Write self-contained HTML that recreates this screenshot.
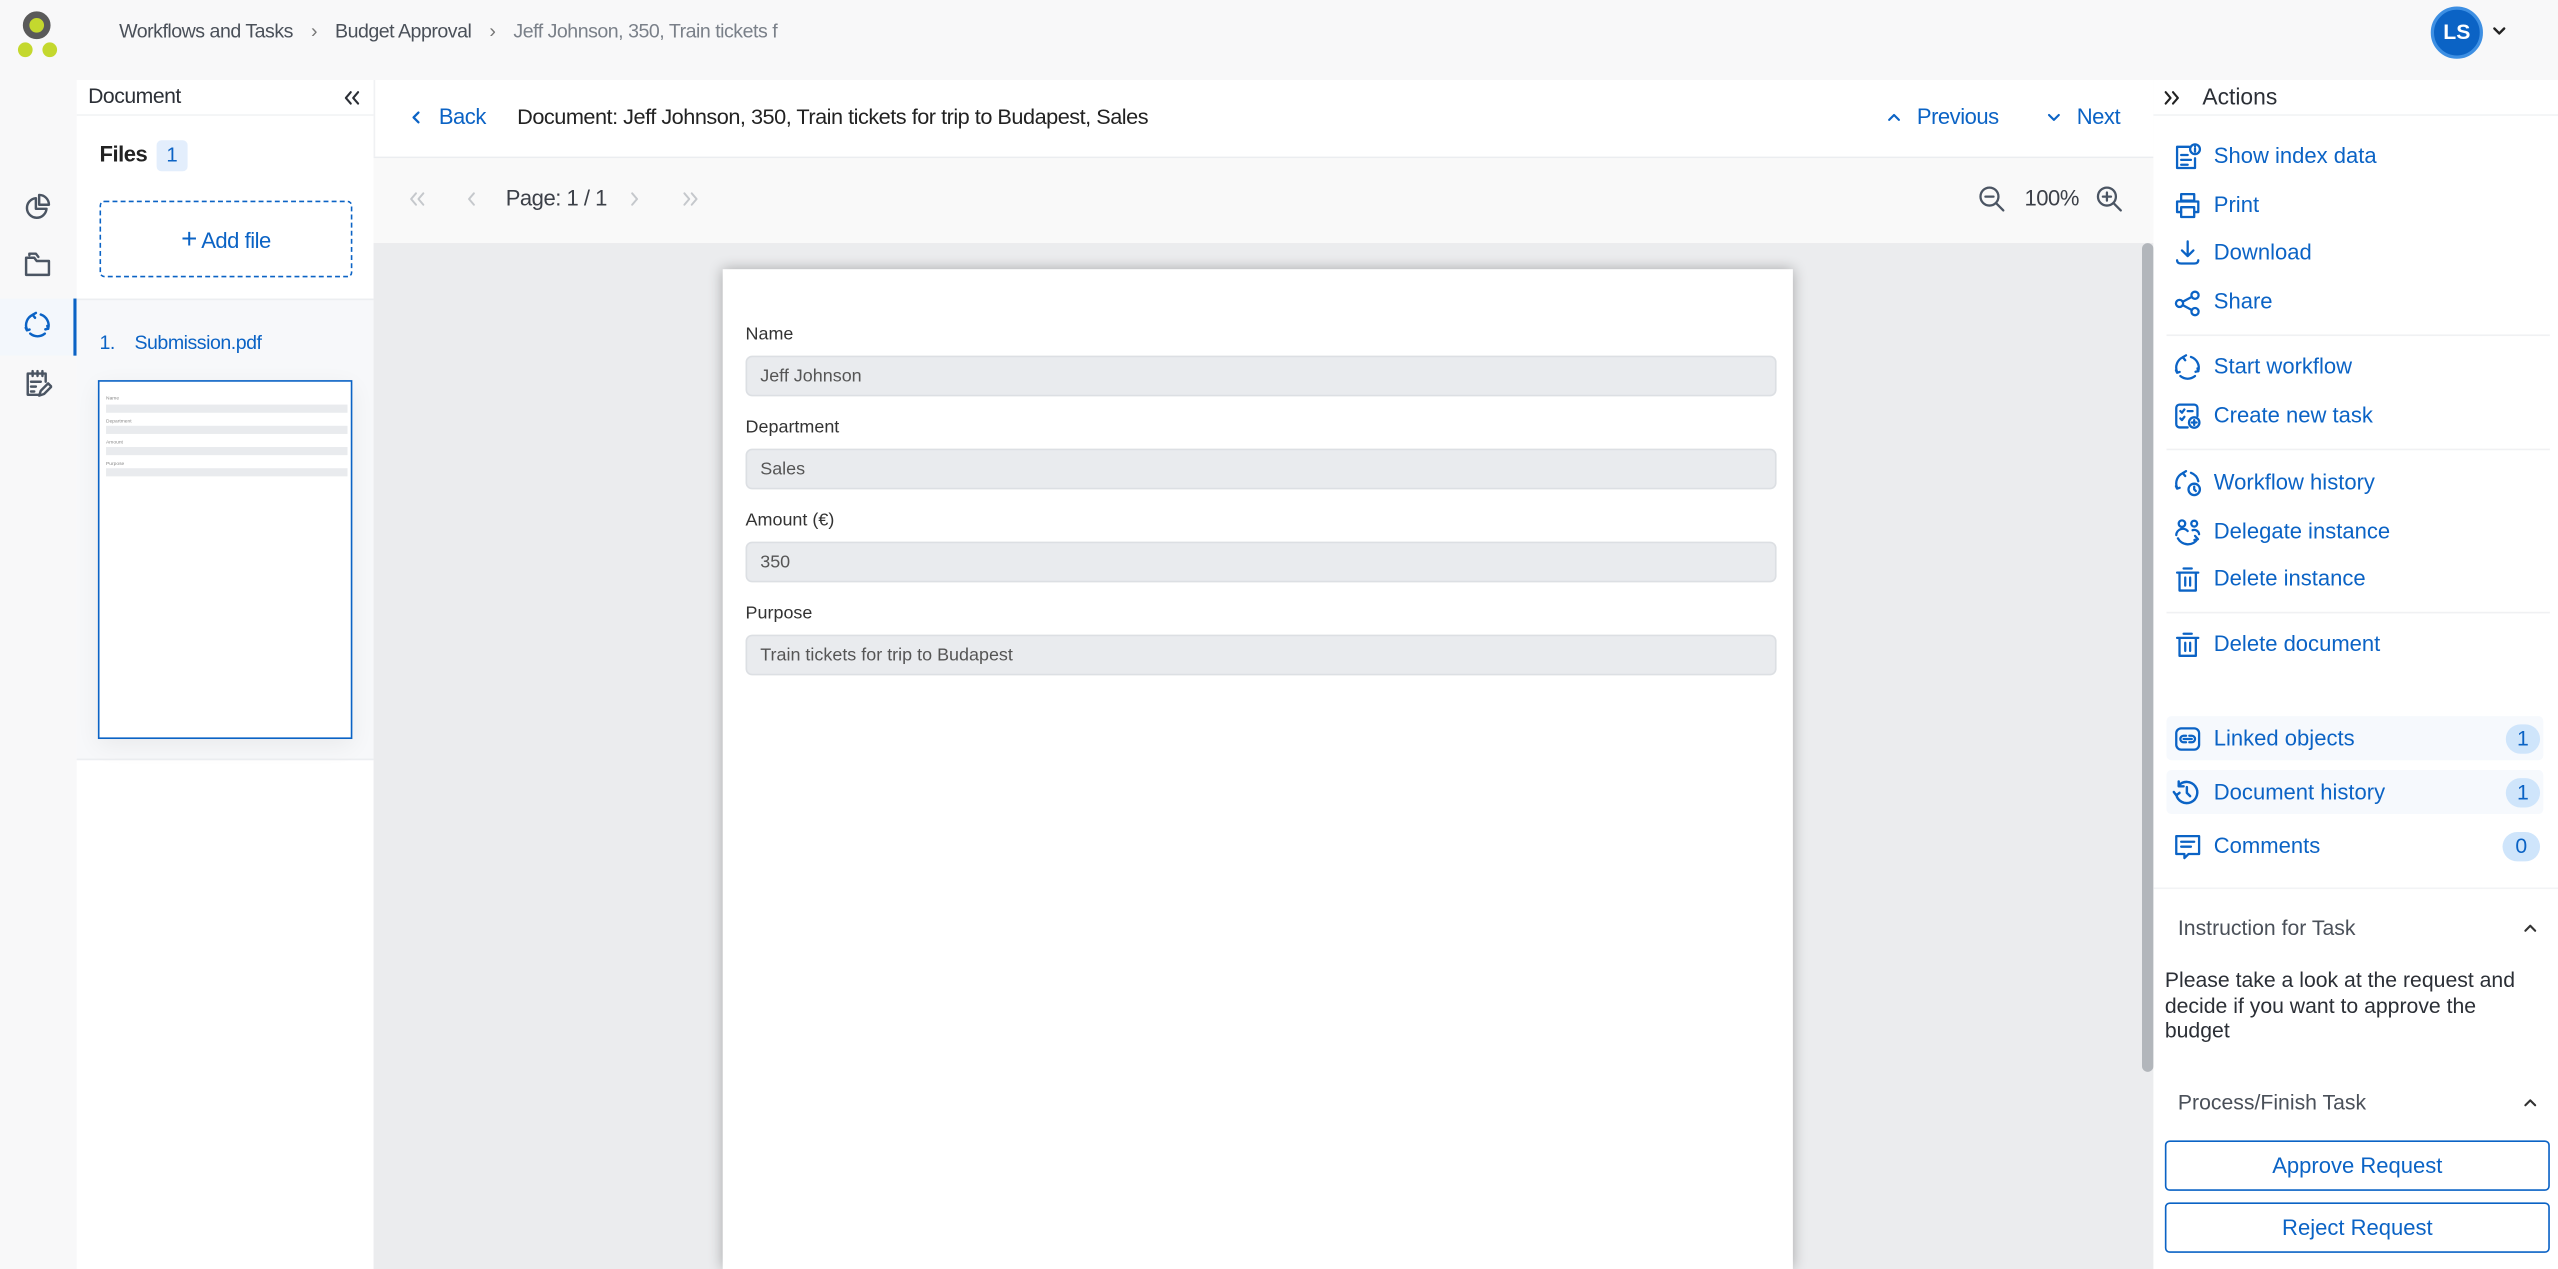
<!DOCTYPE html>
<html><head><meta charset="utf-8">
<style>
*{box-sizing:border-box;margin:0;padding:0}
html,body{width:2558px;height:1269px;overflow:hidden;background:#f8f8f9}
#w{position:absolute;left:0;top:0;width:1568px;height:778px;transform:scale(1.63138);transform-origin:0 0;font-family:"Liberation Sans",sans-serif;color:#2b2f36;background:#f8f8f9}
.a{position:absolute}
.blue{color:#0b63c5}
svg{position:absolute;fill:none;stroke-linecap:round;stroke-linejoin:round}
.ic{stroke:#0b63c5;stroke-width:1.4;width:18px;height:18px}
.gi{stroke:#4b5563;stroke-width:1.5;width:18px;height:18px}
.act{position:absolute;left:1357px;font-size:13.5px;color:#0b63c5}
.lab{position:absolute;left:457px;font-size:11px;color:#333}
.inp{position:absolute;left:457px;width:632px;height:25px;background:#e9ebee;border:1px solid #dcdfe3;border-radius:4px;font-size:11px;color:#555;padding:6px 8px}
.badge{position:absolute;left:1536px;width:21px;height:18px;border-radius:9px;background:#cfe5fb;color:#0b63c5;font-size:13px;text-align:center;line-height:18px}
.sep{position:absolute;left:1328px;width:235px;height:1px;background:#f0f1f3}
.cd{letter-spacing:-0.3px}
</style></head><body><div id="w">
<!-- logo -->
<div class="a" style="left:14px;top:7px;width:17px;height:17px;border-radius:50%;background:#c4d82e;border:4px solid #5a5a5a"></div>
<div class="a" style="left:11px;top:26px;width:9px;height:9px;border-radius:50%;background:#c4d82e"></div>
<div class="a" style="left:25.5px;top:26px;width:9px;height:9px;border-radius:50%;background:#c4d82e"></div>
<!-- breadcrumb -->
<div class="a cd" style="left:73px;top:12px;font-size:12px;color:#4a5059;white-space:nowrap">Workflows and Tasks <span style="margin:0 8px;color:#777">›</span> Budget Approval <span style="margin:0 8px;color:#777">›</span> <span style="color:#7a8089">Jeff Johnson, 350, Train tickets f</span></div>
<!-- avatar -->
<div class="a" style="left:1490px;top:4px;width:32px;height:32px;border-radius:50%;background:#0b63c5;border:2px solid #3d8fe3;color:#fff;font-weight:bold;font-size:13px;text-align:center;line-height:28px">LS</div>
<svg style="left:1527px;top:14px;width:10px;height:10px;stroke:#222;stroke-width:1.5" viewBox="0 0 10 10"><path d="M2 3.5l3 3 3-3"/></svg>

<!-- left rail -->
<div class="a" style="left:0;top:183px;width:46px;height:35px;background:#f3f7fc"></div>
<div class="a" style="left:45px;top:183px;width:2px;height:35px;background:#0b63c5"></div>
<svg class="gi" style="left:14px;top:118px" viewBox="0 0 18 18"><path d="M8 3.5a6 6 0 1 0 6.5 6.5H8z"/><path d="M10 1.5v6h6a6 6 0 0 0-6-6z"/></svg>
<svg class="gi" style="left:14px;top:153px" viewBox="0 0 18 18"><path d="M2 5v10.5h14V7H8.5L7 5z"/><path d="M4 3.5V2.5h4l1.5 2"/></svg>
<svg class="ic" style="left:14px;top:190px;stroke-width:1.5" viewBox="0 0 18 18"><path d="M6 3a7 7 0 0 0-3.5 9"/><path d="M4.5 14.5a7 7 0 0 0 9 0"/><path d="M15.5 11.5A7 7 0 0 0 11 2.8"/><path d="M8 1.8L6 3l1.5 1.8M1.8 11l.7 1.5 1.6-.5M15 9.8l.5 1.7-1.7.4"/></svg>
<svg class="gi" style="left:14px;top:226px" viewBox="0 0 18 18"><path d="M11 16H3V3h11v5"/><path d="M6 1.5v3M9 1.5v3M12 1.5v3M5 8h6M5 11h3M5 14h2"/><path d="M10 16.5l1-3 4.5-4.5 2 2-4.5 4.5z"/></svg>

<!-- document panel -->
<div class="a" style="left:47px;top:49px;width:182px;height:729px;background:#fff"></div>
<div class="a" style="left:47px;top:70px;width:182px;height:1px;background:#f2f3f5"></div>
<div class="a cd" style="left:54px;top:51px;font-size:13px;color:#2b2f36">Document</div>
<svg style="left:209px;top:54px;width:14px;height:12px;stroke:#2b2f36;stroke-width:1.3" viewBox="0 0 14 12"><path d="M6 2.5L3 6l3 3.5M10.5 2.5L7.5 6l3 3.5"/></svg>
<div class="a cd" style="left:61px;top:87px;font-size:13.5px;font-weight:bold;color:#222">Files</div>
<div class="a" style="left:96px;top:86px;width:19px;height:19px;border-radius:3px;background:#e3eefc;color:#0b63c5;font-size:12.5px;text-align:center;line-height:19px">1</div>
<div class="a cd" style="left:61px;top:123px;width:155px;height:47px;border:1px dashed #0b63c5;border-radius:3px;font-size:13.5px;color:#0b63c5;text-align:center;line-height:45px"><span style="font-size:17px">+</span> Add file</div>
<div class="a" style="left:47px;top:183px;width:182px;height:283px;background:#f7f8fa;border-top:1px solid #eceef1;border-bottom:1px solid #eceef1"></div>
<div class="a cd" style="left:61px;top:203px;font-size:12px;color:#0b63c5">1.<span style="margin-left:12px">Submission.pdf</span></div>
<div class="a" style="left:60px;top:233px;width:156px;height:220px;background:#fff;border:1px solid #0b63c5;box-shadow:0 4px 14px rgba(0,0,0,.06)">
 <div class="a" style="left:4px;top:8px;font-size:3px;color:#888">Name</div>
 <div class="a" style="left:4px;top:14px;width:148px;height:5px;background:#e9ebee"></div>
 <div class="a" style="left:4px;top:22px;font-size:3px;color:#888">Department</div>
 <div class="a" style="left:4px;top:27px;width:148px;height:5px;background:#e9ebee"></div>
 <div class="a" style="left:4px;top:35px;font-size:3px;color:#888">Amount</div>
 <div class="a" style="left:4px;top:40px;width:148px;height:5px;background:#e9ebee"></div>
 <div class="a" style="left:4px;top:48px;font-size:3px;color:#888">Purpose</div>
 <div class="a" style="left:4px;top:53px;width:148px;height:5px;background:#e9ebee"></div>
</div>

<!-- center -->
<div class="a" style="left:229px;top:49px;width:1091px;height:48px;background:#fff;border-bottom:1px solid #ebedf0;border-left:1px solid #f0f1f3"></div>
<svg style="left:250px;top:66px;width:10px;height:12px;stroke:#0b63c5;stroke-width:1.4" viewBox="0 0 10 12"><path d="M6.5 3L3.5 6l3 3"/></svg>
<div class="a blue cd" style="left:269px;top:64px;font-size:13.5px">Back</div>
<div class="a cd" style="left:317px;top:64px;font-size:13.3px;color:#222">Document: Jeff Johnson, 350, Train tickets for trip to Budapest, Sales</div>
<svg style="left:1155px;top:67px;width:12px;height:10px;stroke:#0b63c5;stroke-width:1.3" viewBox="0 0 12 10"><path d="M3 6.5l3-3 3 3"/></svg>
<div class="a blue cd" style="left:1175px;top:64px;font-size:13.5px">Previous</div>
<svg style="left:1253px;top:67px;width:12px;height:10px;stroke:#0b63c5;stroke-width:1.3" viewBox="0 0 12 10"><path d="M3 3.5l3 3 3-3"/></svg>
<div class="a blue cd" style="left:1273px;top:64px;font-size:13.5px">Next</div>
<div class="a" style="left:229px;top:97px;width:1091px;height:52px;background:#f9f9f9"></div>
<svg style="left:249px;top:116px;width:14px;height:12px;stroke:#c5c8cc;stroke-width:1.2" viewBox="0 0 14 12"><path d="M6 2.5L3 6l3 3.5M10.5 2.5L7.5 6l3 3.5"/></svg>
<svg style="left:284px;top:116px;width:10px;height:12px;stroke:#c5c8cc;stroke-width:1.2" viewBox="0 0 10 12"><path d="M6.5 2.5L3.5 6l3 3.5"/></svg>
<div class="a cd" style="left:310px;top:114px;font-size:13.5px;color:#3c4048">Page: 1 / 1</div>
<svg style="left:384px;top:116px;width:10px;height:12px;stroke:#c5c8cc;stroke-width:1.2" viewBox="0 0 10 12"><path d="M3.5 2.5L6.5 6l-3 3.5"/></svg>
<svg style="left:416px;top:116px;width:14px;height:12px;stroke:#c5c8cc;stroke-width:1.2" viewBox="0 0 14 12"><path d="M3.5 2.5L6.5 6l-3 3.5M8 2.5L11 6l-3 3.5"/></svg>
<svg class="gi" style="left:1212px;top:113px;stroke-width:1.4" viewBox="0 0 18 18"><circle cx="7.5" cy="7.5" r="5.5"/><path d="M11.5 11.5l4.5 4.5M5 7.5h5"/></svg>
<div class="a cd" style="left:1241px;top:114px;font-size:13.5px;color:#3c4048">100%</div>
<svg class="gi" style="left:1284px;top:113px;stroke-width:1.4" viewBox="0 0 18 18"><circle cx="7.5" cy="7.5" r="5.5"/><path d="M11.5 11.5l4.5 4.5M5 7.5h5M7.5 5v5"/></svg>
<div class="a" style="left:229px;top:149px;width:1091px;height:629px;background:#ebecee"></div>
<div class="a" style="left:1313px;top:149px;width:7px;height:508px;background:#b2b6bb;border-radius:4px"></div>
<div class="a" style="left:443px;top:165px;width:656px;height:613px;background:#fff;box-shadow:0 0 8px rgba(0,0,0,.3)"></div>
<div class="lab" style="top:199px">Name</div>
<div class="inp" style="top:218px">Jeff Johnson</div>
<div class="lab" style="top:256px">Department</div>
<div class="inp" style="top:275px">Sales</div>
<div class="lab" style="top:313px">Amount (€)</div>
<div class="inp" style="top:332px">350</div>
<div class="lab" style="top:370px">Purpose</div>
<div class="inp" style="top:389px">Train tickets for trip to Budapest</div>

<!-- right panel -->
<div class="a" style="left:1320px;top:49px;width:248px;height:729px;background:#fff"></div>
<div class="a" style="left:1320px;top:70px;width:248px;height:1px;background:#f2f3f5"></div>
<svg style="left:1324px;top:54px;width:14px;height:12px;stroke:#222;stroke-width:1.3" viewBox="0 0 14 12"><path d="M3.5 2.5L6.5 6l-3 3.5M8 2.5L11 6l-3 3.5"/></svg>
<div class="a" style="left:1350px;top:51px;font-size:14px;color:#2b2f36">Actions</div>

<svg class="ic" style="left:1332px;top:87px" viewBox="0 0 18 18"><path d="M10 3H2.5v13h11V10"/><path d="M5 8h4M5 11h6M5 14h4"/><circle cx="13.5" cy="4.5" r="3"/><path d="M13.5 4v2M13.5 2.8v0"/></svg>
<div class="act" style="top:88px">Show index data</div>
<svg class="ic" style="left:1332px;top:117px" viewBox="0 0 18 18"><rect x="5" y="2" width="8" height="4"/><path d="M5 13H2.5V6.5h13V13H13"/><rect x="5" y="10" width="8" height="6"/></svg>
<div class="act" style="top:118px">Print</div>
<svg class="ic" style="left:1332px;top:146px" viewBox="0 0 18 18"><path d="M9 2v9M5.5 7.5L9 11l3.5-3.5M2.5 13.5c0 1.5 1 2 2.5 2h8c1.5 0 2.5-.5 2.5-2"/></svg>
<div class="act" style="top:147px">Download</div>
<svg class="ic" style="left:1332px;top:177px" viewBox="0 0 18 18"><circle cx="4" cy="9" r="2.2"/><circle cx="13.5" cy="4" r="2.2"/><circle cx="13.5" cy="14" r="2.2"/><path d="M6 8l5.5-3M6 10l5.5 3"/></svg>
<div class="act" style="top:177px">Share</div>
<div class="sep" style="top:205px"></div>
<svg class="ic" style="left:1332px;top:216px" viewBox="0 0 18 18"><path d="M6 3a7 7 0 0 0-3.5 9"/><path d="M4.5 14.5a7 7 0 0 0 9 0"/><path d="M15.5 11.5A7 7 0 0 0 11 2.8"/><path d="M8 1.8L6 3l1.5 1.8M1.8 11l.7 1.5 1.6-.5M15 9.8l.5 1.7-1.7.4"/></svg>
<div class="act" style="top:217px">Start workflow</div>
<svg class="ic" style="left:1332px;top:246px" viewBox="0 0 18 18"><path d="M9 16H4a2 2 0 0 1-2-2V4a2 2 0 0 1 2-2h9a2 2 0 0 1 2 2v5"/><path d="M4.5 6l1 1 1.5-2M4.5 10.5l1 1 1.5-2M9 6h3"/><circle cx="13" cy="13" r="3.2"/><path d="M13 11.5v3M11.5 13h3"/></svg>
<div class="act" style="top:247px">Create new task</div>
<div class="sep" style="top:275px"></div>
<svg class="ic" style="left:1332px;top:287px" viewBox="0 0 18 18"><path d="M6 3a7 7 0 0 0-3.5 9"/><path d="M11 2.8A7 7 0 0 1 15.5 8"/><path d="M8 1.8L6 3l1.5 1.8M1.8 11l.7 1.5 1.6-.5"/><circle cx="13" cy="13" r="3.5"/><path d="M13 11.3V13l1 1"/></svg>
<div class="act" style="top:288px">Workflow history</div>
<svg class="ic" style="left:1332px;top:317px" viewBox="0 0 18 18"><circle cx="5.5" cy="4" r="2"/><circle cx="13" cy="4" r="1.8"/><path d="M2 11a4 4 0 0 1 7-2.5M12 8a3 3 0 0 1 4 2.5M3 13a7 7 0 0 0 12 .5M13.5 11.5l1.8 2-2.2.5"/></svg>
<div class="act" style="top:318px">Delegate instance</div>
<svg class="ic" style="left:1332px;top:346px" viewBox="0 0 18 18"><path d="M4 5v11h10V5M2.5 5h13M6.5 2.5h5M7.5 8v5M10.5 8v5"/></svg>
<div class="act" style="top:347px">Delete instance</div>
<div class="sep" style="top:375px"></div>
<svg class="ic" style="left:1332px;top:386px" viewBox="0 0 18 18"><path d="M4 5v11h10V5M2.5 5h13M6.5 2.5h5M7.5 8v5M10.5 8v5"/></svg>
<div class="act" style="top:387px">Delete document</div>

<div class="a" style="left:1328px;top:439px;width:231px;height:27px;background:#f6f9fd;border-radius:3px"></div>
<div class="a" style="left:1328px;top:472px;width:231px;height:27px;background:#f6f9fd;border-radius:3px"></div>
<svg class="ic" style="left:1332px;top:444px" viewBox="0 0 18 18"><rect x="2" y="2.5" width="14" height="13" rx="3"/><path d="M8 7H6.5a2 2 0 0 0 0 4H8M10 7h1.5a2 2 0 0 1 0 4H10M6.5 9h5"/></svg>
<div class="act" style="top:445px">Linked objects</div>
<div class="badge" style="top:444px">1</div>
<svg class="ic" style="left:1331px;top:477px;stroke-width:1.5" viewBox="0 0 18 18"><path d="M3 10a6.5 6.5 0 1 0 1.5-5.5"/><path d="M4.5 2v3h3M1.5 8.5L3 10.5l2-1.5M9.5 5.5V9l2 2"/></svg>
<div class="act" style="top:478px">Document history</div>
<div class="badge" style="top:477px">1</div>
<svg class="ic" style="left:1332px;top:510px" viewBox="0 0 18 18"><path d="M2 2.5h14v11H9.5L7 16v-2.5H2z"/><path d="M5 6h8M5 9h6"/></svg>
<div class="act" style="top:511px">Comments</div>
<div class="badge" style="top:510px;left:1534px;width:23px">0</div>
<div class="a" style="left:1320px;top:544px;width:248px;height:1px;background:#f2f3f5"></div>
<div class="a" style="left:1335px;top:561px;font-size:13px;color:#4a5059">Instruction for Task</div>
<svg style="left:1545px;top:564px;width:12px;height:10px;stroke:#333;stroke-width:1.3" viewBox="0 0 12 10"><path d="M3 6.5l3-3 3 3"/></svg>
<div class="a" style="left:1327px;top:593px;width:232px;font-size:13px;line-height:15.5px;color:#2b2f36">Please take a look at the request and decide if you want to approve the budget</div>
<div class="a" style="left:1335px;top:668px;font-size:13px;color:#4a5059">Process/Finish Task</div>
<svg style="left:1545px;top:671px;width:12px;height:10px;stroke:#333;stroke-width:1.3" viewBox="0 0 12 10"><path d="M3 6.5l3-3 3 3"/></svg>
<div class="a" style="left:1327px;top:699px;width:236px;height:31px;border:1px solid #0b63c5;border-radius:3px;color:#0b63c5;font-size:13.5px;text-align:center;line-height:29px">Approve Request</div>
<div class="a" style="left:1327px;top:737px;width:236px;height:31px;border:1px solid #0b63c5;border-radius:3px;color:#0b63c5;font-size:13.5px;text-align:center;line-height:29px">Reject Request</div>
</div></body></html>
